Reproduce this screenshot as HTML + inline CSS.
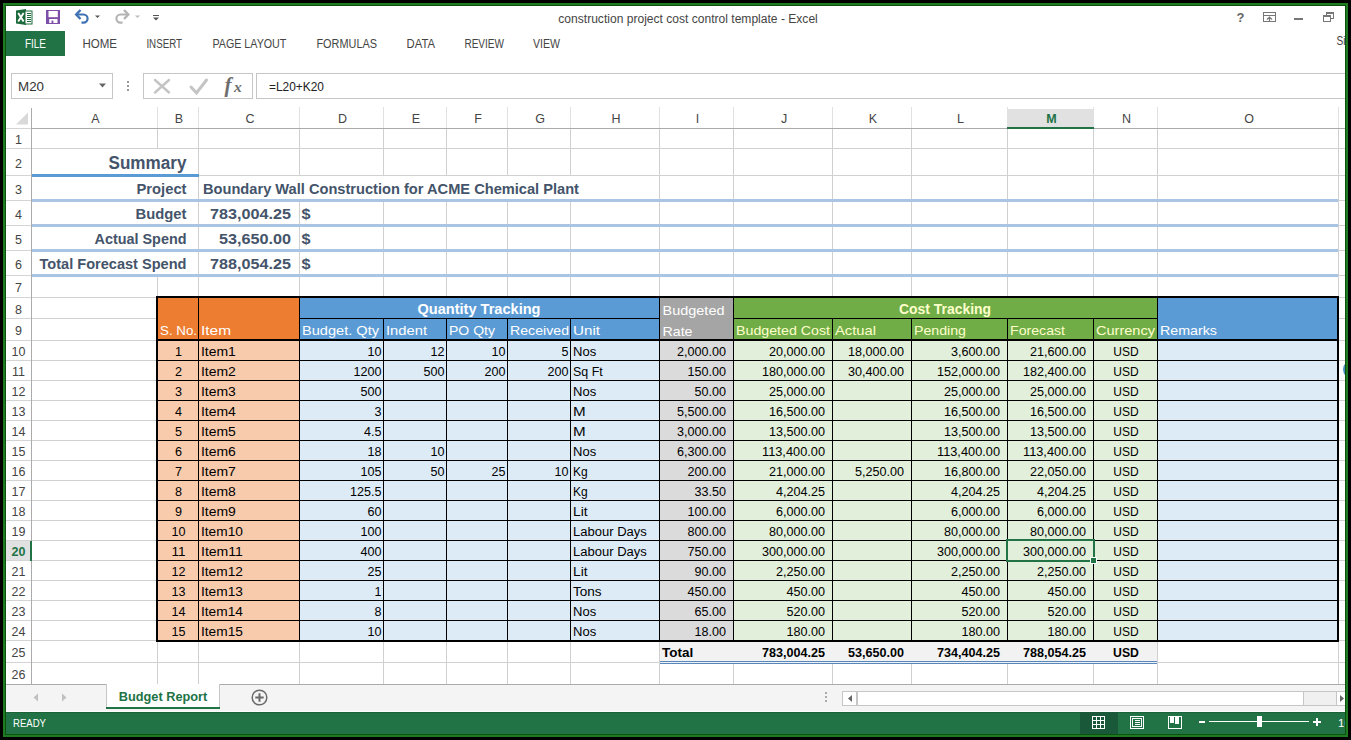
<!DOCTYPE html>
<html><head><meta charset="utf-8"><title>construction project cost control template - Excel</title>
<style>
html,body{margin:0;padding:0;background:#000;}
body{width:1351px;height:740px;overflow:hidden;}
svg{display:block;font-family:"Liberation Sans", sans-serif;shape-rendering:crispEdges;}
text{shape-rendering:auto;}
</style></head><body>
<svg width="1351" height="740" viewBox="0 0 1351 740">
<rect x="0" y="0" width="1351" height="740" fill="#000"/>
<rect x="3" y="3" width="1345" height="734" fill="#1f7a22"/>
<rect x="5" y="5" width="1341" height="730" fill="#0b520e"/>
<rect x="6" y="6" width="1339" height="728" fill="#ffffff"/>
<text x="558.30" y="23.00" font-size="12" fill="#444444" text-anchor="start" textLength="259.50" lengthAdjust="spacingAndGlyphs">construction project cost control template - Excel</text>
<g shape-rendering="auto"><path d="M16 10.5 L26 9 L26 25 L16 23.5 Z" fill="#1d6b3c"/><rect x="25" y="11" width="7" height="13" fill="#ffffff" stroke="#1d6b3c" stroke-width="1"/><path d="M27 13.5h4M27 15.5h4M27 17.5h4M27 19.5h4M27 21.5h4" stroke="#1d6b3c" stroke-width="1"/><path d="M18.2 13 L23.6 21.5 M23.6 13 L18.2 21.5" stroke="#ffffff" stroke-width="1.9"/></g>
<g shape-rendering="auto"><rect x="46" y="10" width="14" height="14" fill="#7d4fa8"/><rect x="48.5" y="11" width="9.3" height="6.2" fill="#ffffff"/><rect x="49.2" y="19" width="8.3" height="4" fill="#ffffff"/><rect x="51.5" y="20.6" width="1.9" height="2.4" fill="#7d4fa8"/></g>
<g shape-rendering="auto" fill="none" stroke-linecap="butt" stroke-linejoin="miter"><path d="M80.5 10 L76.2 14.5 L80.5 19" stroke="#3f72b5" stroke-width="2.4"/><path d="M77 14.5 H83.5 A4.1 4.1 0 0 1 83.5 22.7 H81.5" stroke="#3f72b5" stroke-width="2.2"/><path d="M95 15.5 L100 15.5 L97.5 18 Z" fill="#555" stroke="none"/><path d="M124 10 L128.3 14.5 L124 19" stroke="#b4b4b4" stroke-width="2.4"/><path d="M127.5 14.5 H120.5 A4.1 4.1 0 0 0 120.5 22.7 H122.5" stroke="#b4b4b4" stroke-width="2.2"/><path d="M135 15.5 L140 15.5 L137.5 18 Z" fill="#bbb" stroke="none"/><path d="M153 15.5 H159" stroke="#555" stroke-width="1"/><path d="M153 17.5 L159 17.5 L156 20.5 Z" fill="#555" stroke="none"/></g>
<g shape-rendering="auto"><text x="1240.5" y="22" font-size="13" font-weight="bold" fill="#666" text-anchor="middle">?</text><rect x="1263.5" y="12.5" width="12" height="9" fill="none" stroke="#777" stroke-width="1"/><path d="M1264 15.5 H1275" stroke="#777" stroke-width="1"/><path d="M1269.5 21 V17.5 M1267 19.5 L1269.5 17 L1272 19.5" stroke="#777" stroke-width="1.2" fill="none"/><rect x="1294" y="18" width="9" height="2" fill="#777"/><rect x="1326.5" y="12.5" width="7" height="6" fill="none" stroke="#777" stroke-width="1"/><rect x="1323.5" y="15.5" width="7" height="6" fill="#fff" stroke="#777" stroke-width="1"/><path d="M1327 13.5 H1333 M1324 16.5 H1330" stroke="#777" stroke-width="1"/></g>
<rect x="6" y="31" width="59" height="25" fill="#217346"/>
<text x="25.00" y="48.00" font-size="12.5" fill="#ffffff" text-anchor="start" textLength="21.00" lengthAdjust="spacingAndGlyphs">FILE</text>
<text x="82.40" y="48.00" font-size="12.5" fill="#444444" text-anchor="start" textLength="34.60" lengthAdjust="spacingAndGlyphs">HOME</text>
<text x="146.40" y="48.00" font-size="12.5" fill="#444444" text-anchor="start" textLength="35.60" lengthAdjust="spacingAndGlyphs">INSERT</text>
<text x="212.40" y="48.00" font-size="12.5" fill="#444444" text-anchor="start" textLength="74.00" lengthAdjust="spacingAndGlyphs">PAGE LAYOUT</text>
<text x="316.40" y="48.00" font-size="12.5" fill="#444444" text-anchor="start" textLength="60.60" lengthAdjust="spacingAndGlyphs">FORMULAS</text>
<text x="406.60" y="48.00" font-size="12.5" fill="#444444" text-anchor="start" textLength="28.40" lengthAdjust="spacingAndGlyphs">DATA</text>
<text x="464.40" y="48.00" font-size="12.5" fill="#444444" text-anchor="start" textLength="39.60" lengthAdjust="spacingAndGlyphs">REVIEW</text>
<text x="533.00" y="48.00" font-size="12.5" fill="#444444" text-anchor="start" textLength="27.00" lengthAdjust="spacingAndGlyphs">VIEW</text>
<text x="1336.50" y="45.00" font-size="12.5" fill="#444444" text-anchor="start" textLength="9.00" lengthAdjust="spacingAndGlyphs">Si</text>
<rect x="11" y="73" width="102" height="26" fill="#c6c6c6"/>
<rect x="12" y="74" width="100" height="24" fill="#ffffff"/>
<text x="18.00" y="91.00" font-size="12.5" fill="#333333" text-anchor="start" textLength="26.00" lengthAdjust="spacingAndGlyphs">M20</text>
<path d="M99 83.5 H106 L102.5 87.5 Z" fill="#666" shape-rendering="auto"/>
<rect x="127" y="81" width="2" height="2" fill="#999"/>
<rect x="127" y="85" width="2" height="2" fill="#999"/>
<rect x="127" y="89" width="2" height="2" fill="#999"/>
<rect x="143" y="73" width="110" height="26" fill="#c6c6c6"/>
<rect x="144" y="74" width="108" height="24" fill="#ffffff"/>
<g shape-rendering="auto" fill="none" stroke-linecap="round"><path d="M155 80 L169 92.5 M169 80 L155 92.5" stroke="#c4c4c4" stroke-width="2.4"/><path d="M191 87 L196.5 93 L206.5 80" stroke="#c4c4c4" stroke-width="3"/></g>
<text x="224.5" y="92" font-size="21" font-style="italic" font-weight="bold" fill="#6e6e6e" font-family="Liberation Serif">f</text>
<text x="234" y="92" font-size="15.5" font-style="italic" font-weight="bold" fill="#6e6e6e" font-family="Liberation Serif">x</text>
<rect x="256" y="73" width="1089" height="26" fill="#c6c6c6"/>
<rect x="257" y="74" width="1088" height="24" fill="#ffffff"/>
<text x="269.00" y="91.00" font-size="12.5" fill="#222222" text-anchor="start" textLength="55.00" lengthAdjust="spacingAndGlyphs">=L20+K20</text>
<rect x="6" y="99" width="1339" height="30" fill="#ffffff"/>
<rect x="157" y="107" width="1" height="21" fill="#e1e1e1"/>
<rect x="198" y="107" width="1" height="21" fill="#e1e1e1"/>
<rect x="299" y="107" width="1" height="21" fill="#e1e1e1"/>
<rect x="383" y="107" width="1" height="21" fill="#e1e1e1"/>
<rect x="446" y="107" width="1" height="21" fill="#e1e1e1"/>
<rect x="507" y="107" width="1" height="21" fill="#e1e1e1"/>
<rect x="570" y="107" width="1" height="21" fill="#e1e1e1"/>
<rect x="659" y="107" width="1" height="21" fill="#e1e1e1"/>
<rect x="733" y="107" width="1" height="21" fill="#e1e1e1"/>
<rect x="832" y="107" width="1" height="21" fill="#e1e1e1"/>
<rect x="911" y="107" width="1" height="21" fill="#e1e1e1"/>
<rect x="1007" y="107" width="1" height="21" fill="#e1e1e1"/>
<rect x="1093" y="107" width="1" height="21" fill="#e1e1e1"/>
<rect x="1157" y="107" width="1" height="21" fill="#e1e1e1"/>
<rect x="1338" y="107" width="1" height="21" fill="#e1e1e1"/>
<rect x="31" y="108" width="1" height="577" fill="#ababab"/>
<rect x="6" y="128" width="25" height="1" fill="#d4d4d4"/>
<rect x="32" y="128" width="1313" height="1" fill="#ababab"/>
<path d="M16 124.5 L28 124.5 L28 112.5 Z" fill="#d9d9d9" shape-rendering="auto"/>
<rect x="1007" y="109" width="87" height="18" fill="#e1e1e1"/>
<rect x="1007" y="127" width="87" height="2" fill="#217346"/>
<text x="95.50" y="122.50" font-size="12.5" fill="#444444" text-anchor="middle">A</text>
<text x="179.00" y="122.50" font-size="12.5" fill="#444444" text-anchor="middle">B</text>
<text x="250.00" y="122.50" font-size="12.5" fill="#444444" text-anchor="middle">C</text>
<text x="342.50" y="122.50" font-size="12.5" fill="#444444" text-anchor="middle">D</text>
<text x="416.00" y="122.50" font-size="12.5" fill="#444444" text-anchor="middle">E</text>
<text x="478.00" y="122.50" font-size="12.5" fill="#444444" text-anchor="middle">F</text>
<text x="540.00" y="122.50" font-size="12.5" fill="#444444" text-anchor="middle">G</text>
<text x="616.00" y="122.50" font-size="12.5" fill="#444444" text-anchor="middle">H</text>
<text x="697.50" y="122.50" font-size="12.5" fill="#444444" text-anchor="middle">I</text>
<text x="784.00" y="122.50" font-size="12.5" fill="#444444" text-anchor="middle">J</text>
<text x="873.00" y="122.50" font-size="12.5" fill="#444444" text-anchor="middle">K</text>
<text x="960.50" y="122.50" font-size="12.5" fill="#444444" text-anchor="middle">L</text>
<text x="1051.50" y="122.50" font-size="12.5" font-weight="bold" fill="#217346" text-anchor="middle">M</text>
<text x="1126.50" y="122.50" font-size="12.5" fill="#444444" text-anchor="middle">N</text>
<text x="1249.00" y="122.50" font-size="12.5" fill="#444444" text-anchor="middle">O</text>
<rect x="1338" y="107" width="1" height="21" fill="#e1e1e1"/>
<rect x="32" y="148" width="1313" height="1" fill="#d0d0d0"/>
<rect x="32" y="175" width="1313" height="1" fill="#d0d0d0"/>
<rect x="32" y="200" width="1313" height="1" fill="#d0d0d0"/>
<rect x="32" y="225" width="1313" height="1" fill="#d0d0d0"/>
<rect x="32" y="250" width="1313" height="1" fill="#d0d0d0"/>
<rect x="32" y="275" width="1313" height="1" fill="#d0d0d0"/>
<rect x="32" y="297" width="1313" height="1" fill="#d0d0d0"/>
<rect x="32" y="318" width="1313" height="1" fill="#d0d0d0"/>
<rect x="32" y="340" width="1313" height="1" fill="#d0d0d0"/>
<rect x="32" y="360" width="1313" height="1" fill="#d0d0d0"/>
<rect x="32" y="380" width="1313" height="1" fill="#d0d0d0"/>
<rect x="32" y="400" width="1313" height="1" fill="#d0d0d0"/>
<rect x="32" y="420" width="1313" height="1" fill="#d0d0d0"/>
<rect x="32" y="440" width="1313" height="1" fill="#d0d0d0"/>
<rect x="32" y="460" width="1313" height="1" fill="#d0d0d0"/>
<rect x="32" y="480" width="1313" height="1" fill="#d0d0d0"/>
<rect x="32" y="500" width="1313" height="1" fill="#d0d0d0"/>
<rect x="32" y="520" width="1313" height="1" fill="#d0d0d0"/>
<rect x="32" y="540" width="1313" height="1" fill="#d0d0d0"/>
<rect x="32" y="560" width="1313" height="1" fill="#d0d0d0"/>
<rect x="32" y="580" width="1313" height="1" fill="#d0d0d0"/>
<rect x="32" y="600" width="1313" height="1" fill="#d0d0d0"/>
<rect x="32" y="620" width="1313" height="1" fill="#d0d0d0"/>
<rect x="32" y="640" width="1313" height="1" fill="#d0d0d0"/>
<rect x="32" y="662" width="1313" height="1" fill="#d0d0d0"/>
<rect x="32" y="684" width="1313" height="1" fill="#d0d0d0"/>
<rect x="157" y="129" width="1" height="556" fill="#d0d0d0"/>
<rect x="198" y="129" width="1" height="556" fill="#d0d0d0"/>
<rect x="299" y="129" width="1" height="556" fill="#d0d0d0"/>
<rect x="383" y="129" width="1" height="556" fill="#d0d0d0"/>
<rect x="446" y="129" width="1" height="556" fill="#d0d0d0"/>
<rect x="507" y="129" width="1" height="556" fill="#d0d0d0"/>
<rect x="570" y="129" width="1" height="556" fill="#d0d0d0"/>
<rect x="659" y="129" width="1" height="556" fill="#d0d0d0"/>
<rect x="733" y="129" width="1" height="556" fill="#d0d0d0"/>
<rect x="832" y="129" width="1" height="556" fill="#d0d0d0"/>
<rect x="911" y="129" width="1" height="556" fill="#d0d0d0"/>
<rect x="1007" y="129" width="1" height="556" fill="#d0d0d0"/>
<rect x="1093" y="129" width="1" height="556" fill="#d0d0d0"/>
<rect x="1157" y="129" width="1" height="556" fill="#d0d0d0"/>
<rect x="1338" y="129" width="1" height="556" fill="#d0d0d0"/>
<rect x="6" y="148" width="25" height="1" fill="#d4d4d4"/>
<rect x="6" y="175" width="25" height="1" fill="#d4d4d4"/>
<rect x="6" y="200" width="25" height="1" fill="#d4d4d4"/>
<rect x="6" y="225" width="25" height="1" fill="#d4d4d4"/>
<rect x="6" y="250" width="25" height="1" fill="#d4d4d4"/>
<rect x="6" y="275" width="25" height="1" fill="#d4d4d4"/>
<rect x="6" y="297" width="25" height="1" fill="#d4d4d4"/>
<rect x="6" y="318" width="25" height="1" fill="#d4d4d4"/>
<rect x="6" y="340" width="25" height="1" fill="#d4d4d4"/>
<rect x="6" y="360" width="25" height="1" fill="#d4d4d4"/>
<rect x="6" y="380" width="25" height="1" fill="#d4d4d4"/>
<rect x="6" y="400" width="25" height="1" fill="#d4d4d4"/>
<rect x="6" y="420" width="25" height="1" fill="#d4d4d4"/>
<rect x="6" y="440" width="25" height="1" fill="#d4d4d4"/>
<rect x="6" y="460" width="25" height="1" fill="#d4d4d4"/>
<rect x="6" y="480" width="25" height="1" fill="#d4d4d4"/>
<rect x="6" y="500" width="25" height="1" fill="#d4d4d4"/>
<rect x="6" y="520" width="25" height="1" fill="#d4d4d4"/>
<rect x="6" y="540" width="25" height="1" fill="#d4d4d4"/>
<rect x="6" y="560" width="25" height="1" fill="#d4d4d4"/>
<rect x="6" y="580" width="25" height="1" fill="#d4d4d4"/>
<rect x="6" y="600" width="25" height="1" fill="#d4d4d4"/>
<rect x="6" y="620" width="25" height="1" fill="#d4d4d4"/>
<rect x="6" y="640" width="25" height="1" fill="#d4d4d4"/>
<rect x="6" y="662" width="25" height="1" fill="#d4d4d4"/>
<rect x="6" y="684" width="25" height="1" fill="#d4d4d4"/>
<rect x="6" y="541" width="24" height="19" fill="#e1e1e1"/>
<rect x="30" y="541" width="2" height="20" fill="#217346"/>
<text x="18.50" y="144.00" font-size="12.5" fill="#444444" text-anchor="middle">1</text>
<text x="18.50" y="167.50" font-size="12.5" fill="#444444" text-anchor="middle">2</text>
<text x="18.50" y="193.50" font-size="12.5" fill="#444444" text-anchor="middle">3</text>
<text x="18.50" y="218.50" font-size="12.5" fill="#444444" text-anchor="middle">4</text>
<text x="18.50" y="243.50" font-size="12.5" fill="#444444" text-anchor="middle">5</text>
<text x="18.50" y="268.50" font-size="12.5" fill="#444444" text-anchor="middle">6</text>
<text x="18.50" y="292.00" font-size="12.5" fill="#444444" text-anchor="middle">7</text>
<text x="18.50" y="313.50" font-size="12.5" fill="#444444" text-anchor="middle">8</text>
<text x="18.50" y="335.00" font-size="12.5" fill="#444444" text-anchor="middle">9</text>
<text x="18.50" y="356.00" font-size="12.5" fill="#444444" text-anchor="middle">10</text>
<text x="18.50" y="376.00" font-size="12.5" fill="#444444" text-anchor="middle">11</text>
<text x="18.50" y="396.00" font-size="12.5" fill="#444444" text-anchor="middle">12</text>
<text x="18.50" y="416.00" font-size="12.5" fill="#444444" text-anchor="middle">13</text>
<text x="18.50" y="436.00" font-size="12.5" fill="#444444" text-anchor="middle">14</text>
<text x="18.50" y="456.00" font-size="12.5" fill="#444444" text-anchor="middle">15</text>
<text x="18.50" y="476.00" font-size="12.5" fill="#444444" text-anchor="middle">16</text>
<text x="18.50" y="496.00" font-size="12.5" fill="#444444" text-anchor="middle">17</text>
<text x="18.50" y="516.00" font-size="12.5" fill="#444444" text-anchor="middle">18</text>
<text x="18.50" y="536.00" font-size="12.5" fill="#444444" text-anchor="middle">19</text>
<text x="18.50" y="556.00" font-size="12.5" font-weight="bold" fill="#217346" text-anchor="middle">20</text>
<text x="18.50" y="576.00" font-size="12.5" fill="#444444" text-anchor="middle">21</text>
<text x="18.50" y="596.00" font-size="12.5" fill="#444444" text-anchor="middle">22</text>
<text x="18.50" y="616.00" font-size="12.5" fill="#444444" text-anchor="middle">23</text>
<text x="18.50" y="636.00" font-size="12.5" fill="#444444" text-anchor="middle">24</text>
<text x="18.50" y="657.00" font-size="12.5" fill="#444444" text-anchor="middle">25</text>
<text x="18.50" y="679.00" font-size="12.5" fill="#444444" text-anchor="middle">26</text>
<rect x="157" y="149" width="1" height="126" fill="#ffffff"/>
<rect x="299" y="176" width="1" height="24" fill="#ffffff"/>
<rect x="383" y="176" width="1" height="24" fill="#ffffff"/>
<rect x="446" y="176" width="1" height="24" fill="#ffffff"/>
<rect x="507" y="176" width="1" height="24" fill="#ffffff"/>
<rect x="570" y="176" width="1" height="24" fill="#ffffff"/>
<rect x="32" y="174" width="167" height="3" fill="#5b9bd5"/>
<rect x="32" y="199" width="1306" height="3" fill="#aac5e3"/>
<rect x="32" y="224" width="1306" height="3" fill="#aac5e3"/>
<rect x="32" y="249" width="1306" height="3" fill="#aac5e3"/>
<rect x="32" y="274" width="1306" height="3" fill="#aac5e3"/>
<text x="108.50" y="168.50" font-size="17.5" font-weight="bold" fill="#44546a" text-anchor="start" textLength="78.00" lengthAdjust="spacingAndGlyphs">Summary</text>
<text x="136.50" y="193.50" font-size="15" font-weight="bold" fill="#44546a" text-anchor="start" textLength="50.00" lengthAdjust="spacingAndGlyphs">Project</text>
<text x="135.50" y="218.50" font-size="15" font-weight="bold" fill="#44546a" text-anchor="start" textLength="51.00" lengthAdjust="spacingAndGlyphs">Budget</text>
<text x="94.50" y="243.50" font-size="15" font-weight="bold" fill="#44546a" text-anchor="start" textLength="92.00" lengthAdjust="spacingAndGlyphs">Actual Spend</text>
<text x="39.50" y="268.50" font-size="15" font-weight="bold" fill="#44546a" text-anchor="start" textLength="147.00" lengthAdjust="spacingAndGlyphs">Total Forecast Spend</text>
<text x="203.00" y="193.50" font-size="15" font-weight="bold" fill="#44546a" text-anchor="start" textLength="376.00" lengthAdjust="spacingAndGlyphs">Boundary Wall Construction for ACME Chemical Plant</text>
<text x="210.00" y="218.50" font-size="15" font-weight="bold" fill="#44546a" text-anchor="start" textLength="81.00" lengthAdjust="spacingAndGlyphs">783,004.25</text>
<text x="301.50" y="218.50" font-size="15" font-weight="bold" fill="#44546a" text-anchor="start" textLength="9.00" lengthAdjust="spacingAndGlyphs">$</text>
<text x="219.00" y="243.50" font-size="15" font-weight="bold" fill="#44546a" text-anchor="start" textLength="72.00" lengthAdjust="spacingAndGlyphs">53,650.00</text>
<text x="301.50" y="243.50" font-size="15" font-weight="bold" fill="#44546a" text-anchor="start" textLength="9.00" lengthAdjust="spacingAndGlyphs">$</text>
<text x="210.00" y="268.50" font-size="15" font-weight="bold" fill="#44546a" text-anchor="start" textLength="81.00" lengthAdjust="spacingAndGlyphs">788,054.25</text>
<text x="301.50" y="268.50" font-size="15" font-weight="bold" fill="#44546a" text-anchor="start" textLength="9.00" lengthAdjust="spacingAndGlyphs">$</text>
<rect x="158" y="298" width="142" height="43" fill="#ed7d31"/>
<rect x="158" y="341" width="142" height="300" fill="#f8cbad"/>
<rect x="300" y="298" width="360" height="43" fill="#5b9bd5"/>
<rect x="300" y="341" width="360" height="300" fill="#ddebf7"/>
<rect x="660" y="298" width="74" height="43" fill="#a5a5a5"/>
<rect x="660" y="341" width="74" height="300" fill="#dbdbdb"/>
<rect x="734" y="298" width="424" height="43" fill="#70ad47"/>
<rect x="734" y="341" width="424" height="300" fill="#e2efda"/>
<rect x="1158" y="298" width="181" height="43" fill="#5b9bd5"/>
<rect x="1158" y="341" width="181" height="300" fill="#ddebf7"/>
<rect x="660" y="642" width="497" height="20" fill="#f2f2f2"/>
<rect x="198" y="297" width="1" height="344" fill="#000000"/>
<rect x="299" y="297" width="1" height="344" fill="#000000"/>
<rect x="659" y="297" width="1" height="344" fill="#000000"/>
<rect x="733" y="297" width="1" height="344" fill="#000000"/>
<rect x="1157" y="297" width="1" height="344" fill="#000000"/>
<rect x="383" y="318" width="1" height="323" fill="#000000"/>
<rect x="446" y="318" width="1" height="323" fill="#000000"/>
<rect x="507" y="318" width="1" height="323" fill="#000000"/>
<rect x="570" y="318" width="1" height="323" fill="#000000"/>
<rect x="832" y="318" width="1" height="323" fill="#000000"/>
<rect x="911" y="318" width="1" height="323" fill="#000000"/>
<rect x="1007" y="318" width="1" height="323" fill="#000000"/>
<rect x="1093" y="318" width="1" height="323" fill="#000000"/>
<rect x="157" y="360" width="1182" height="1" fill="#000000"/>
<rect x="157" y="380" width="1182" height="1" fill="#000000"/>
<rect x="157" y="400" width="1182" height="1" fill="#000000"/>
<rect x="157" y="420" width="1182" height="1" fill="#000000"/>
<rect x="157" y="440" width="1182" height="1" fill="#000000"/>
<rect x="157" y="460" width="1182" height="1" fill="#000000"/>
<rect x="157" y="480" width="1182" height="1" fill="#000000"/>
<rect x="157" y="500" width="1182" height="1" fill="#000000"/>
<rect x="157" y="520" width="1182" height="1" fill="#000000"/>
<rect x="157" y="540" width="1182" height="1" fill="#000000"/>
<rect x="157" y="560" width="1182" height="1" fill="#000000"/>
<rect x="157" y="580" width="1182" height="1" fill="#000000"/>
<rect x="157" y="600" width="1182" height="1" fill="#000000"/>
<rect x="157" y="620" width="1182" height="1" fill="#000000"/>
<rect x="299" y="318" width="361" height="1" fill="#000000"/>
<rect x="733" y="318" width="425" height="1" fill="#000000"/>
<rect x="156" y="296" width="1183" height="2" fill="#000000"/>
<rect x="156" y="339" width="1183" height="2" fill="#000000"/>
<rect x="156" y="640" width="1183" height="2" fill="#000000"/>
<rect x="156" y="296" width="2" height="346" fill="#000000"/>
<rect x="1337" y="296" width="2" height="346" fill="#000000"/>
<rect x="660" y="661" width="497" height="1" fill="#5b87b8"/>
<rect x="660" y="662" width="497" height="1" fill="#eaf3fb"/>
<rect x="660" y="663" width="497" height="1" fill="#5b87b8"/>
<text x="417.50" y="313.70" font-size="14" font-weight="bold" fill="#ffffff" text-anchor="start" textLength="123.00" lengthAdjust="spacingAndGlyphs">Quantity Tracking</text>
<text x="899.00" y="313.70" font-size="14" font-weight="bold" fill="#ffffcc" text-anchor="start" textLength="92.00" lengthAdjust="spacingAndGlyphs">Cost Tracking</text>
<text x="662.50" y="314.80" font-size="13.5" fill="#ffffff" text-anchor="start" textLength="62.00" lengthAdjust="spacingAndGlyphs">Budgeted</text>
<text x="662.50" y="335.50" font-size="13.5" fill="#ffffff" text-anchor="start" textLength="30.00" lengthAdjust="spacingAndGlyphs">Rate</text>
<text x="160.00" y="335.00" font-size="13.5" fill="#ffffff" text-anchor="start" textLength="37.00" lengthAdjust="spacingAndGlyphs">S. No.</text>
<text x="201.00" y="335.00" font-size="13.5" fill="#ffffff" text-anchor="start" textLength="30.00" lengthAdjust="spacingAndGlyphs">Item</text>
<text x="302.00" y="335.00" font-size="13.5" fill="#ffffff" text-anchor="start" textLength="77.00" lengthAdjust="spacingAndGlyphs">Budget. Qty</text>
<text x="386.00" y="335.00" font-size="13.5" fill="#ffffff" text-anchor="start" textLength="41.00" lengthAdjust="spacingAndGlyphs">Indent</text>
<text x="449.00" y="335.00" font-size="13.5" fill="#ffffff" text-anchor="start" textLength="46.00" lengthAdjust="spacingAndGlyphs">PO Qty</text>
<text x="510.00" y="335.00" font-size="13.5" fill="#ffffff" text-anchor="start" textLength="59.00" lengthAdjust="spacingAndGlyphs">Received</text>
<text x="573.00" y="335.00" font-size="13.5" fill="#ffffff" text-anchor="start" textLength="27.00" lengthAdjust="spacingAndGlyphs">Unit</text>
<text x="736.00" y="335.00" font-size="13.5" fill="#ffffcc" text-anchor="start" textLength="94.00" lengthAdjust="spacingAndGlyphs">Budgeted Cost</text>
<text x="835.00" y="335.00" font-size="13.5" fill="#ffffcc" text-anchor="start" textLength="41.00" lengthAdjust="spacingAndGlyphs">Actual</text>
<text x="914.00" y="335.00" font-size="13.5" fill="#ffffcc" text-anchor="start" textLength="52.00" lengthAdjust="spacingAndGlyphs">Pending</text>
<text x="1010.00" y="335.00" font-size="13.5" fill="#ffffcc" text-anchor="start" textLength="55.00" lengthAdjust="spacingAndGlyphs">Forecast</text>
<text x="1096.00" y="335.00" font-size="13.5" fill="#ffffcc" text-anchor="start" textLength="59.00" lengthAdjust="spacingAndGlyphs">Currency</text>
<text x="1160.00" y="335.00" font-size="13.5" fill="#ffffff" text-anchor="start" textLength="57.00" lengthAdjust="spacingAndGlyphs">Remarks</text>
<text x="175.00" y="356.00" font-size="12.5" fill="#000" text-anchor="start" textLength="7.00" lengthAdjust="spacingAndGlyphs">1</text>
<text x="201.00" y="356.00" font-size="12.5" fill="#000" text-anchor="start" textLength="34.87" lengthAdjust="spacingAndGlyphs">Item1</text>
<text x="367.50" y="356.00" font-size="12.5" fill="#000" text-anchor="start" textLength="14.00" lengthAdjust="spacingAndGlyphs">10</text>
<text x="430.50" y="356.00" font-size="12.5" fill="#000" text-anchor="start" textLength="14.00" lengthAdjust="spacingAndGlyphs">12</text>
<text x="491.50" y="356.00" font-size="12.5" fill="#000" text-anchor="start" textLength="14.00" lengthAdjust="spacingAndGlyphs">10</text>
<text x="561.50" y="356.00" font-size="12.5" fill="#000" text-anchor="start" textLength="7.00" lengthAdjust="spacingAndGlyphs">5</text>
<text x="573.00" y="356.00" font-size="12.5" fill="#000" text-anchor="start" textLength="23.15" lengthAdjust="spacingAndGlyphs">Nos</text>
<text x="677.00" y="356.00" font-size="12.5" fill="#000" text-anchor="start" textLength="49.00" lengthAdjust="spacingAndGlyphs">2,000.00</text>
<text x="769.00" y="356.00" font-size="12.5" fill="#000" text-anchor="start" textLength="56.00" lengthAdjust="spacingAndGlyphs">20,000.00</text>
<text x="848.00" y="356.00" font-size="12.5" fill="#000" text-anchor="start" textLength="56.00" lengthAdjust="spacingAndGlyphs">18,000.00</text>
<text x="951.00" y="356.00" font-size="12.5" fill="#000" text-anchor="start" textLength="49.00" lengthAdjust="spacingAndGlyphs">3,600.00</text>
<text x="1030.00" y="356.00" font-size="12.5" fill="#000" text-anchor="start" textLength="56.00" lengthAdjust="spacingAndGlyphs">21,600.00</text>
<text x="1113.30" y="356.00" font-size="12.5" fill="#000" text-anchor="start" textLength="25.40" lengthAdjust="spacingAndGlyphs">USD</text>
<text x="175.00" y="376.00" font-size="12.5" fill="#000" text-anchor="start" textLength="7.00" lengthAdjust="spacingAndGlyphs">2</text>
<text x="201.00" y="376.00" font-size="12.5" fill="#000" text-anchor="start" textLength="34.87" lengthAdjust="spacingAndGlyphs">Item2</text>
<text x="353.50" y="376.00" font-size="12.5" fill="#000" text-anchor="start" textLength="28.00" lengthAdjust="spacingAndGlyphs">1200</text>
<text x="423.50" y="376.00" font-size="12.5" fill="#000" text-anchor="start" textLength="21.00" lengthAdjust="spacingAndGlyphs">500</text>
<text x="484.50" y="376.00" font-size="12.5" fill="#000" text-anchor="start" textLength="21.00" lengthAdjust="spacingAndGlyphs">200</text>
<text x="547.50" y="376.00" font-size="12.5" fill="#000" text-anchor="start" textLength="21.00" lengthAdjust="spacingAndGlyphs">200</text>
<text x="573.00" y="376.00" font-size="12.5" fill="#000" text-anchor="start" textLength="29.68" lengthAdjust="spacingAndGlyphs">Sq Ft</text>
<text x="687.50" y="376.00" font-size="12.5" fill="#000" text-anchor="start" textLength="38.50" lengthAdjust="spacingAndGlyphs">150.00</text>
<text x="762.00" y="376.00" font-size="12.5" fill="#000" text-anchor="start" textLength="63.00" lengthAdjust="spacingAndGlyphs">180,000.00</text>
<text x="848.00" y="376.00" font-size="12.5" fill="#000" text-anchor="start" textLength="56.00" lengthAdjust="spacingAndGlyphs">30,400.00</text>
<text x="937.00" y="376.00" font-size="12.5" fill="#000" text-anchor="start" textLength="63.00" lengthAdjust="spacingAndGlyphs">152,000.00</text>
<text x="1023.00" y="376.00" font-size="12.5" fill="#000" text-anchor="start" textLength="63.00" lengthAdjust="spacingAndGlyphs">182,400.00</text>
<text x="1113.30" y="376.00" font-size="12.5" fill="#000" text-anchor="start" textLength="25.40" lengthAdjust="spacingAndGlyphs">USD</text>
<text x="175.00" y="396.00" font-size="12.5" fill="#000" text-anchor="start" textLength="7.00" lengthAdjust="spacingAndGlyphs">3</text>
<text x="201.00" y="396.00" font-size="12.5" fill="#000" text-anchor="start" textLength="34.87" lengthAdjust="spacingAndGlyphs">Item3</text>
<text x="360.50" y="396.00" font-size="12.5" fill="#000" text-anchor="start" textLength="21.00" lengthAdjust="spacingAndGlyphs">500</text>
<text x="573.00" y="396.00" font-size="12.5" fill="#000" text-anchor="start" textLength="23.15" lengthAdjust="spacingAndGlyphs">Nos</text>
<text x="694.50" y="396.00" font-size="12.5" fill="#000" text-anchor="start" textLength="31.50" lengthAdjust="spacingAndGlyphs">50.00</text>
<text x="769.00" y="396.00" font-size="12.5" fill="#000" text-anchor="start" textLength="56.00" lengthAdjust="spacingAndGlyphs">25,000.00</text>
<text x="944.00" y="396.00" font-size="12.5" fill="#000" text-anchor="start" textLength="56.00" lengthAdjust="spacingAndGlyphs">25,000.00</text>
<text x="1030.00" y="396.00" font-size="12.5" fill="#000" text-anchor="start" textLength="56.00" lengthAdjust="spacingAndGlyphs">25,000.00</text>
<text x="1113.30" y="396.00" font-size="12.5" fill="#000" text-anchor="start" textLength="25.40" lengthAdjust="spacingAndGlyphs">USD</text>
<text x="175.00" y="416.00" font-size="12.5" fill="#000" text-anchor="start" textLength="7.00" lengthAdjust="spacingAndGlyphs">4</text>
<text x="201.00" y="416.00" font-size="12.5" fill="#000" text-anchor="start" textLength="34.87" lengthAdjust="spacingAndGlyphs">Item4</text>
<text x="374.50" y="416.00" font-size="12.5" fill="#000" text-anchor="start" textLength="7.00" lengthAdjust="spacingAndGlyphs">3</text>
<text x="573.00" y="416.00" font-size="12.5" fill="#000" text-anchor="start" textLength="12.65" lengthAdjust="spacingAndGlyphs">M</text>
<text x="677.00" y="416.00" font-size="12.5" fill="#000" text-anchor="start" textLength="49.00" lengthAdjust="spacingAndGlyphs">5,500.00</text>
<text x="769.00" y="416.00" font-size="12.5" fill="#000" text-anchor="start" textLength="56.00" lengthAdjust="spacingAndGlyphs">16,500.00</text>
<text x="944.00" y="416.00" font-size="12.5" fill="#000" text-anchor="start" textLength="56.00" lengthAdjust="spacingAndGlyphs">16,500.00</text>
<text x="1030.00" y="416.00" font-size="12.5" fill="#000" text-anchor="start" textLength="56.00" lengthAdjust="spacingAndGlyphs">16,500.00</text>
<text x="1113.30" y="416.00" font-size="12.5" fill="#000" text-anchor="start" textLength="25.40" lengthAdjust="spacingAndGlyphs">USD</text>
<text x="175.00" y="436.00" font-size="12.5" fill="#000" text-anchor="start" textLength="7.00" lengthAdjust="spacingAndGlyphs">5</text>
<text x="201.00" y="436.00" font-size="12.5" fill="#000" text-anchor="start" textLength="34.87" lengthAdjust="spacingAndGlyphs">Item5</text>
<text x="364.00" y="436.00" font-size="12.5" fill="#000" text-anchor="start" textLength="17.50" lengthAdjust="spacingAndGlyphs">4.5</text>
<text x="573.00" y="436.00" font-size="12.5" fill="#000" text-anchor="start" textLength="12.65" lengthAdjust="spacingAndGlyphs">M</text>
<text x="677.00" y="436.00" font-size="12.5" fill="#000" text-anchor="start" textLength="49.00" lengthAdjust="spacingAndGlyphs">3,000.00</text>
<text x="769.00" y="436.00" font-size="12.5" fill="#000" text-anchor="start" textLength="56.00" lengthAdjust="spacingAndGlyphs">13,500.00</text>
<text x="944.00" y="436.00" font-size="12.5" fill="#000" text-anchor="start" textLength="56.00" lengthAdjust="spacingAndGlyphs">13,500.00</text>
<text x="1030.00" y="436.00" font-size="12.5" fill="#000" text-anchor="start" textLength="56.00" lengthAdjust="spacingAndGlyphs">13,500.00</text>
<text x="1113.30" y="436.00" font-size="12.5" fill="#000" text-anchor="start" textLength="25.40" lengthAdjust="spacingAndGlyphs">USD</text>
<text x="175.00" y="456.00" font-size="12.5" fill="#000" text-anchor="start" textLength="7.00" lengthAdjust="spacingAndGlyphs">6</text>
<text x="201.00" y="456.00" font-size="12.5" fill="#000" text-anchor="start" textLength="34.87" lengthAdjust="spacingAndGlyphs">Item6</text>
<text x="367.50" y="456.00" font-size="12.5" fill="#000" text-anchor="start" textLength="14.00" lengthAdjust="spacingAndGlyphs">18</text>
<text x="430.50" y="456.00" font-size="12.5" fill="#000" text-anchor="start" textLength="14.00" lengthAdjust="spacingAndGlyphs">10</text>
<text x="573.00" y="456.00" font-size="12.5" fill="#000" text-anchor="start" textLength="23.15" lengthAdjust="spacingAndGlyphs">Nos</text>
<text x="677.00" y="456.00" font-size="12.5" fill="#000" text-anchor="start" textLength="49.00" lengthAdjust="spacingAndGlyphs">6,300.00</text>
<text x="762.00" y="456.00" font-size="12.5" fill="#000" text-anchor="start" textLength="63.00" lengthAdjust="spacingAndGlyphs">113,400.00</text>
<text x="937.00" y="456.00" font-size="12.5" fill="#000" text-anchor="start" textLength="63.00" lengthAdjust="spacingAndGlyphs">113,400.00</text>
<text x="1023.00" y="456.00" font-size="12.5" fill="#000" text-anchor="start" textLength="63.00" lengthAdjust="spacingAndGlyphs">113,400.00</text>
<text x="1113.30" y="456.00" font-size="12.5" fill="#000" text-anchor="start" textLength="25.40" lengthAdjust="spacingAndGlyphs">USD</text>
<text x="175.00" y="476.00" font-size="12.5" fill="#000" text-anchor="start" textLength="7.00" lengthAdjust="spacingAndGlyphs">7</text>
<text x="201.00" y="476.00" font-size="12.5" fill="#000" text-anchor="start" textLength="34.87" lengthAdjust="spacingAndGlyphs">Item7</text>
<text x="360.50" y="476.00" font-size="12.5" fill="#000" text-anchor="start" textLength="21.00" lengthAdjust="spacingAndGlyphs">105</text>
<text x="430.50" y="476.00" font-size="12.5" fill="#000" text-anchor="start" textLength="14.00" lengthAdjust="spacingAndGlyphs">50</text>
<text x="491.50" y="476.00" font-size="12.5" fill="#000" text-anchor="start" textLength="14.00" lengthAdjust="spacingAndGlyphs">25</text>
<text x="554.50" y="476.00" font-size="12.5" fill="#000" text-anchor="start" textLength="14.00" lengthAdjust="spacingAndGlyphs">10</text>
<text x="573.00" y="476.00" font-size="12.5" fill="#000" text-anchor="start" textLength="14.66" lengthAdjust="spacingAndGlyphs">Kg</text>
<text x="687.50" y="476.00" font-size="12.5" fill="#000" text-anchor="start" textLength="38.50" lengthAdjust="spacingAndGlyphs">200.00</text>
<text x="769.00" y="476.00" font-size="12.5" fill="#000" text-anchor="start" textLength="56.00" lengthAdjust="spacingAndGlyphs">21,000.00</text>
<text x="855.00" y="476.00" font-size="12.5" fill="#000" text-anchor="start" textLength="49.00" lengthAdjust="spacingAndGlyphs">5,250.00</text>
<text x="944.00" y="476.00" font-size="12.5" fill="#000" text-anchor="start" textLength="56.00" lengthAdjust="spacingAndGlyphs">16,800.00</text>
<text x="1030.00" y="476.00" font-size="12.5" fill="#000" text-anchor="start" textLength="56.00" lengthAdjust="spacingAndGlyphs">22,050.00</text>
<text x="1113.30" y="476.00" font-size="12.5" fill="#000" text-anchor="start" textLength="25.40" lengthAdjust="spacingAndGlyphs">USD</text>
<text x="175.00" y="496.00" font-size="12.5" fill="#000" text-anchor="start" textLength="7.00" lengthAdjust="spacingAndGlyphs">8</text>
<text x="201.00" y="496.00" font-size="12.5" fill="#000" text-anchor="start" textLength="34.87" lengthAdjust="spacingAndGlyphs">Item8</text>
<text x="350.00" y="496.00" font-size="12.5" fill="#000" text-anchor="start" textLength="31.50" lengthAdjust="spacingAndGlyphs">125.5</text>
<text x="573.00" y="496.00" font-size="12.5" fill="#000" text-anchor="start" textLength="14.66" lengthAdjust="spacingAndGlyphs">Kg</text>
<text x="694.50" y="496.00" font-size="12.5" fill="#000" text-anchor="start" textLength="31.50" lengthAdjust="spacingAndGlyphs">33.50</text>
<text x="776.00" y="496.00" font-size="12.5" fill="#000" text-anchor="start" textLength="49.00" lengthAdjust="spacingAndGlyphs">4,204.25</text>
<text x="951.00" y="496.00" font-size="12.5" fill="#000" text-anchor="start" textLength="49.00" lengthAdjust="spacingAndGlyphs">4,204.25</text>
<text x="1037.00" y="496.00" font-size="12.5" fill="#000" text-anchor="start" textLength="49.00" lengthAdjust="spacingAndGlyphs">4,204.25</text>
<text x="1113.30" y="496.00" font-size="12.5" fill="#000" text-anchor="start" textLength="25.40" lengthAdjust="spacingAndGlyphs">USD</text>
<text x="175.00" y="516.00" font-size="12.5" fill="#000" text-anchor="start" textLength="7.00" lengthAdjust="spacingAndGlyphs">9</text>
<text x="201.00" y="516.00" font-size="12.5" fill="#000" text-anchor="start" textLength="34.87" lengthAdjust="spacingAndGlyphs">Item9</text>
<text x="367.50" y="516.00" font-size="12.5" fill="#000" text-anchor="start" textLength="14.00" lengthAdjust="spacingAndGlyphs">60</text>
<text x="573.00" y="516.00" font-size="12.5" fill="#000" text-anchor="start" textLength="14.58" lengthAdjust="spacingAndGlyphs">Lit</text>
<text x="687.50" y="516.00" font-size="12.5" fill="#000" text-anchor="start" textLength="38.50" lengthAdjust="spacingAndGlyphs">100.00</text>
<text x="776.00" y="516.00" font-size="12.5" fill="#000" text-anchor="start" textLength="49.00" lengthAdjust="spacingAndGlyphs">6,000.00</text>
<text x="951.00" y="516.00" font-size="12.5" fill="#000" text-anchor="start" textLength="49.00" lengthAdjust="spacingAndGlyphs">6,000.00</text>
<text x="1037.00" y="516.00" font-size="12.5" fill="#000" text-anchor="start" textLength="49.00" lengthAdjust="spacingAndGlyphs">6,000.00</text>
<text x="1113.30" y="516.00" font-size="12.5" fill="#000" text-anchor="start" textLength="25.40" lengthAdjust="spacingAndGlyphs">USD</text>
<text x="171.50" y="536.00" font-size="12.5" fill="#000" text-anchor="start" textLength="14.00" lengthAdjust="spacingAndGlyphs">10</text>
<text x="201.00" y="536.00" font-size="12.5" fill="#000" text-anchor="start" textLength="41.87" lengthAdjust="spacingAndGlyphs">Item10</text>
<text x="360.50" y="536.00" font-size="12.5" fill="#000" text-anchor="start" textLength="21.00" lengthAdjust="spacingAndGlyphs">100</text>
<text x="573.00" y="536.00" font-size="12.5" fill="#000" text-anchor="start" textLength="73.86" lengthAdjust="spacingAndGlyphs">Labour Days</text>
<text x="687.50" y="536.00" font-size="12.5" fill="#000" text-anchor="start" textLength="38.50" lengthAdjust="spacingAndGlyphs">800.00</text>
<text x="769.00" y="536.00" font-size="12.5" fill="#000" text-anchor="start" textLength="56.00" lengthAdjust="spacingAndGlyphs">80,000.00</text>
<text x="944.00" y="536.00" font-size="12.5" fill="#000" text-anchor="start" textLength="56.00" lengthAdjust="spacingAndGlyphs">80,000.00</text>
<text x="1030.00" y="536.00" font-size="12.5" fill="#000" text-anchor="start" textLength="56.00" lengthAdjust="spacingAndGlyphs">80,000.00</text>
<text x="1113.30" y="536.00" font-size="12.5" fill="#000" text-anchor="start" textLength="25.40" lengthAdjust="spacingAndGlyphs">USD</text>
<text x="171.50" y="556.00" font-size="12.5" fill="#000" text-anchor="start" textLength="14.00" lengthAdjust="spacingAndGlyphs">11</text>
<text x="201.00" y="556.00" font-size="12.5" fill="#000" text-anchor="start" textLength="41.87" lengthAdjust="spacingAndGlyphs">Item11</text>
<text x="360.50" y="556.00" font-size="12.5" fill="#000" text-anchor="start" textLength="21.00" lengthAdjust="spacingAndGlyphs">400</text>
<text x="573.00" y="556.00" font-size="12.5" fill="#000" text-anchor="start" textLength="73.86" lengthAdjust="spacingAndGlyphs">Labour Days</text>
<text x="687.50" y="556.00" font-size="12.5" fill="#000" text-anchor="start" textLength="38.50" lengthAdjust="spacingAndGlyphs">750.00</text>
<text x="762.00" y="556.00" font-size="12.5" fill="#000" text-anchor="start" textLength="63.00" lengthAdjust="spacingAndGlyphs">300,000.00</text>
<text x="937.00" y="556.00" font-size="12.5" fill="#000" text-anchor="start" textLength="63.00" lengthAdjust="spacingAndGlyphs">300,000.00</text>
<text x="1023.00" y="556.00" font-size="12.5" fill="#000" text-anchor="start" textLength="63.00" lengthAdjust="spacingAndGlyphs">300,000.00</text>
<text x="1113.30" y="556.00" font-size="12.5" fill="#000" text-anchor="start" textLength="25.40" lengthAdjust="spacingAndGlyphs">USD</text>
<text x="171.50" y="576.00" font-size="12.5" fill="#000" text-anchor="start" textLength="14.00" lengthAdjust="spacingAndGlyphs">12</text>
<text x="201.00" y="576.00" font-size="12.5" fill="#000" text-anchor="start" textLength="41.87" lengthAdjust="spacingAndGlyphs">Item12</text>
<text x="367.50" y="576.00" font-size="12.5" fill="#000" text-anchor="start" textLength="14.00" lengthAdjust="spacingAndGlyphs">25</text>
<text x="573.00" y="576.00" font-size="12.5" fill="#000" text-anchor="start" textLength="14.58" lengthAdjust="spacingAndGlyphs">Lit</text>
<text x="694.50" y="576.00" font-size="12.5" fill="#000" text-anchor="start" textLength="31.50" lengthAdjust="spacingAndGlyphs">90.00</text>
<text x="776.00" y="576.00" font-size="12.5" fill="#000" text-anchor="start" textLength="49.00" lengthAdjust="spacingAndGlyphs">2,250.00</text>
<text x="951.00" y="576.00" font-size="12.5" fill="#000" text-anchor="start" textLength="49.00" lengthAdjust="spacingAndGlyphs">2,250.00</text>
<text x="1037.00" y="576.00" font-size="12.5" fill="#000" text-anchor="start" textLength="49.00" lengthAdjust="spacingAndGlyphs">2,250.00</text>
<text x="1113.30" y="576.00" font-size="12.5" fill="#000" text-anchor="start" textLength="25.40" lengthAdjust="spacingAndGlyphs">USD</text>
<text x="171.50" y="596.00" font-size="12.5" fill="#000" text-anchor="start" textLength="14.00" lengthAdjust="spacingAndGlyphs">13</text>
<text x="201.00" y="596.00" font-size="12.5" fill="#000" text-anchor="start" textLength="41.87" lengthAdjust="spacingAndGlyphs">Item13</text>
<text x="374.50" y="596.00" font-size="12.5" fill="#000" text-anchor="start" textLength="7.00" lengthAdjust="spacingAndGlyphs">1</text>
<text x="573.00" y="596.00" font-size="12.5" fill="#000" text-anchor="start" textLength="28.58" lengthAdjust="spacingAndGlyphs">Tons</text>
<text x="687.50" y="596.00" font-size="12.5" fill="#000" text-anchor="start" textLength="38.50" lengthAdjust="spacingAndGlyphs">450.00</text>
<text x="786.50" y="596.00" font-size="12.5" fill="#000" text-anchor="start" textLength="38.50" lengthAdjust="spacingAndGlyphs">450.00</text>
<text x="961.50" y="596.00" font-size="12.5" fill="#000" text-anchor="start" textLength="38.50" lengthAdjust="spacingAndGlyphs">450.00</text>
<text x="1047.50" y="596.00" font-size="12.5" fill="#000" text-anchor="start" textLength="38.50" lengthAdjust="spacingAndGlyphs">450.00</text>
<text x="1113.30" y="596.00" font-size="12.5" fill="#000" text-anchor="start" textLength="25.40" lengthAdjust="spacingAndGlyphs">USD</text>
<text x="171.50" y="616.00" font-size="12.5" fill="#000" text-anchor="start" textLength="14.00" lengthAdjust="spacingAndGlyphs">14</text>
<text x="201.00" y="616.00" font-size="12.5" fill="#000" text-anchor="start" textLength="41.87" lengthAdjust="spacingAndGlyphs">Item14</text>
<text x="374.50" y="616.00" font-size="12.5" fill="#000" text-anchor="start" textLength="7.00" lengthAdjust="spacingAndGlyphs">8</text>
<text x="573.00" y="616.00" font-size="12.5" fill="#000" text-anchor="start" textLength="23.15" lengthAdjust="spacingAndGlyphs">Nos</text>
<text x="694.50" y="616.00" font-size="12.5" fill="#000" text-anchor="start" textLength="31.50" lengthAdjust="spacingAndGlyphs">65.00</text>
<text x="786.50" y="616.00" font-size="12.5" fill="#000" text-anchor="start" textLength="38.50" lengthAdjust="spacingAndGlyphs">520.00</text>
<text x="961.50" y="616.00" font-size="12.5" fill="#000" text-anchor="start" textLength="38.50" lengthAdjust="spacingAndGlyphs">520.00</text>
<text x="1047.50" y="616.00" font-size="12.5" fill="#000" text-anchor="start" textLength="38.50" lengthAdjust="spacingAndGlyphs">520.00</text>
<text x="1113.30" y="616.00" font-size="12.5" fill="#000" text-anchor="start" textLength="25.40" lengthAdjust="spacingAndGlyphs">USD</text>
<text x="171.50" y="636.00" font-size="12.5" fill="#000" text-anchor="start" textLength="14.00" lengthAdjust="spacingAndGlyphs">15</text>
<text x="201.00" y="636.00" font-size="12.5" fill="#000" text-anchor="start" textLength="41.87" lengthAdjust="spacingAndGlyphs">Item15</text>
<text x="367.50" y="636.00" font-size="12.5" fill="#000" text-anchor="start" textLength="14.00" lengthAdjust="spacingAndGlyphs">10</text>
<text x="573.00" y="636.00" font-size="12.5" fill="#000" text-anchor="start" textLength="23.15" lengthAdjust="spacingAndGlyphs">Nos</text>
<text x="694.50" y="636.00" font-size="12.5" fill="#000" text-anchor="start" textLength="31.50" lengthAdjust="spacingAndGlyphs">18.00</text>
<text x="786.50" y="636.00" font-size="12.5" fill="#000" text-anchor="start" textLength="38.50" lengthAdjust="spacingAndGlyphs">180.00</text>
<text x="961.50" y="636.00" font-size="12.5" fill="#000" text-anchor="start" textLength="38.50" lengthAdjust="spacingAndGlyphs">180.00</text>
<text x="1047.50" y="636.00" font-size="12.5" fill="#000" text-anchor="start" textLength="38.50" lengthAdjust="spacingAndGlyphs">180.00</text>
<text x="1113.30" y="636.00" font-size="12.5" fill="#000" text-anchor="start" textLength="25.40" lengthAdjust="spacingAndGlyphs">USD</text>
<text x="662.00" y="657.00" font-size="12.5" font-weight="bold" fill="#000" text-anchor="start" textLength="31.26" lengthAdjust="spacingAndGlyphs">Total</text>
<text x="762.00" y="657.00" font-size="12.5" font-weight="bold" fill="#000" text-anchor="start" textLength="63.00" lengthAdjust="spacingAndGlyphs">783,004.25</text>
<text x="848.00" y="657.00" font-size="12.5" font-weight="bold" fill="#000" text-anchor="start" textLength="56.00" lengthAdjust="spacingAndGlyphs">53,650.00</text>
<text x="937.00" y="657.00" font-size="12.5" font-weight="bold" fill="#000" text-anchor="start" textLength="63.00" lengthAdjust="spacingAndGlyphs">734,404.25</text>
<text x="1023.00" y="657.00" font-size="12.5" font-weight="bold" fill="#000" text-anchor="start" textLength="63.00" lengthAdjust="spacingAndGlyphs">788,054.25</text>
<text x="1113.08" y="657.00" font-size="12.5" font-weight="bold" fill="#000" text-anchor="start" textLength="25.83" lengthAdjust="spacingAndGlyphs">USD</text>
<rect x="1006" y="539" width="89" height="2" fill="#217346"/>
<rect x="1006" y="560" width="89" height="2" fill="#217346"/>
<rect x="1006" y="539" width="2" height="23" fill="#217346"/>
<rect x="1093" y="539" width="2" height="23" fill="#217346"/>
<rect x="1090" y="557" width="7" height="7" fill="#ffffff"/>
<rect x="1091" y="558" width="5" height="5" fill="#217346"/>
<rect x="6" y="685" width="1339" height="27" fill="#f4f4f4"/>
<rect x="6" y="684" width="1339" height="1" fill="#ababab"/>
<rect x="6" y="711" width="1339" height="1" fill="#fbfdfb"/>
<path d="M38 693.5 L33.5 697.5 L38 701.5 Z" fill="#c0c0c0" shape-rendering="auto"/>
<path d="M62 693.5 L66.5 697.5 L62 701.5 Z" fill="#c0c0c0" shape-rendering="auto"/>
<rect x="106" y="684" width="114" height="25" fill="#c6c6c6"/>
<rect x="107" y="684" width="112" height="23" fill="#ffffff"/>
<rect x="106" y="707" width="114" height="2" fill="#217346"/>
<text x="118.80" y="701.40" font-size="12.5" font-weight="bold" fill="#217346" text-anchor="start" textLength="88.50" lengthAdjust="spacingAndGlyphs">Budget Report</text>
<g shape-rendering="auto"><circle cx="259.5" cy="697.5" r="7.3" fill="none" stroke="#6a6a6a" stroke-width="1.5"/><path d="M255.3 697.5 H263.7 M259.5 693.3 V701.7" stroke="#6a6a6a" stroke-width="2"/></g>
<rect x="825" y="692" width="2" height="2" fill="#aaaaaa"/>
<rect x="825" y="696" width="2" height="2" fill="#aaaaaa"/>
<rect x="825" y="700" width="2" height="2" fill="#aaaaaa"/>
<rect x="842" y="691" width="503" height="15" fill="#c6c6c6"/>
<rect x="843" y="692" width="502" height="13" fill="#f0f0f0"/>
<rect x="843" y="692" width="13" height="13" fill="#ffffff"/>
<rect x="856" y="692" width="1" height="13" fill="#c6c6c6"/>
<path d="M852 695 L848 698.5 L852 702 Z" fill="#666" shape-rendering="auto"/>
<rect x="857" y="691" width="447" height="15" fill="#c6c6c6"/>
<rect x="858" y="692" width="445" height="13" fill="#ffffff"/>
<rect x="1336" y="691" width="9" height="15" fill="#c6c6c6"/>
<rect x="1337" y="692" width="8" height="13" fill="#ffffff"/>
<path d="M1340 695 L1344 698.5 L1340 702 Z" fill="#666" shape-rendering="auto"/>
<rect x="6" y="712" width="1339" height="22" fill="#217346"/>
<rect x="6" y="712" width="1339" height="1" fill="#1c6239"/>
<text x="13.00" y="727.00" font-size="11.5" fill="#ffffff" text-anchor="start" textLength="33.00" lengthAdjust="spacingAndGlyphs">READY</text>
<rect x="1080" y="712" width="38" height="22" fill="#19593a"/>
<g shape-rendering="crispEdges" fill="none" stroke="#ffffff" stroke-width="1"><rect x="1092.5" y="716.5" width="12" height="12"/><path d="M1096.5 716.5 V728.5 M1100.5 716.5 V728.5 M1092.5 720.5 H1104.5 M1092.5 724.5 H1104.5"/><rect x="1130.5" y="716.5" width="13" height="12"/><rect x="1132.5" y="718.5" width="9" height="8"/><path d="M1134.5 720.5 H1139.5 M1134.5 722.5 H1139.5 M1134.5 724.5 H1139.5"/><rect x="1168.5" y="716.5" width="13" height="12"/></g>
<rect x="1170" y="717" width="4" height="6" fill="#ffffff"/>
<rect x="1175" y="717" width="4" height="7" fill="#ffffff"/>
<rect x="1199" y="721" width="6" height="2" fill="#ffffff"/>
<rect x="1209" y="721" width="100" height="1" fill="#ffffff"/>
<rect x="1257" y="716" width="5" height="11" fill="#ffffff"/>
<rect x="1313" y="721" width="8" height="2" fill="#ffffff"/>
<rect x="1316" y="718" width="2" height="8" fill="#ffffff"/>
<text x="1338.00" y="727.00" font-size="11.5" fill="#ffffff" text-anchor="start">10</text>
<circle cx="1352.5" cy="369.5" r="9.5" fill="#4a8cc0" shape-rendering="auto"/>
<rect x="1345" y="6" width="1" height="728" fill="#0b520e"/>
<rect x="1346" y="3" width="2" height="734" fill="#1f7a22"/>
<rect x="1348" y="0" width="3" height="740" fill="#000"/>
</svg>
</body></html>
